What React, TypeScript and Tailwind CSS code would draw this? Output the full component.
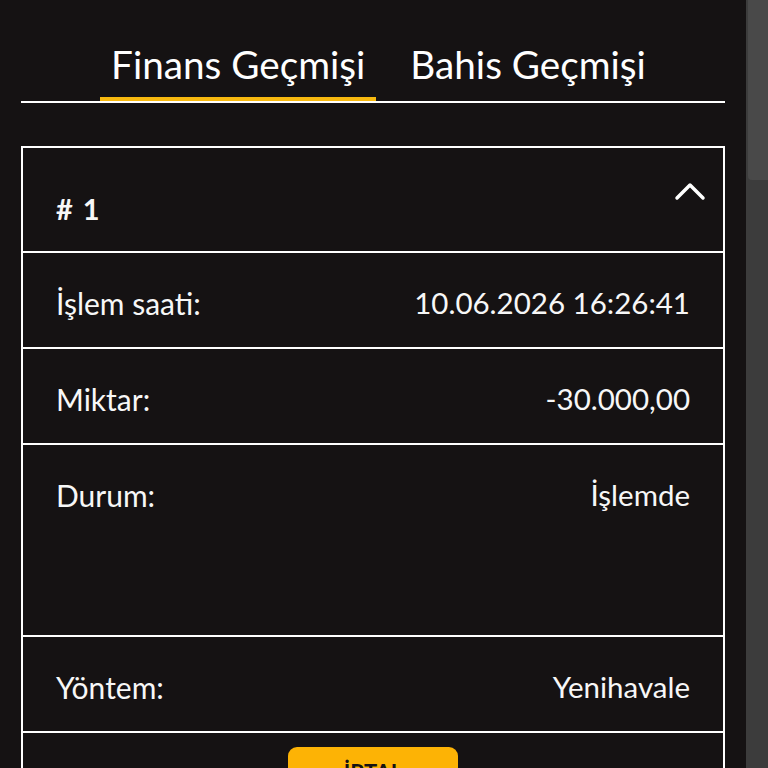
import React from 'react';

const rows = [
  { label: 'İşlem saati:', value: '10.06.2026 16:26:41', tall: false },
  { label: 'Miktar:', value: '-30.000,00', tall: false },
  { label: 'Durum:', value: 'İşlemde', tall: true },
  { label: 'Yöntem:', value: 'Yenihavale', tall: false },
];

const App: React.FC = () => {
  return (
    <div className="flex h-[768px] w-[768px] overflow-hidden bg-[#151213] font-['Lato',sans-serif] text-[#f7f7f7]">
      <div className="flex w-[746px] flex-col px-[21px] pt-[40px]">
        {/* Tabs */}
        <div className="flex justify-center gap-[23px] border-b-2 border-white pl-[11px]">
          <button className="border-b-4 border-[#f7b90f] px-[11px] pb-[9px] text-[38.7px] leading-[48px] text-white">
            Finans Geçmişi
          </button>
          <button className="border-b-4 border-transparent px-[11px] pb-[9px] text-[38.7px] leading-[48px] text-white">
            Bahis Geçmişi
          </button>
        </div>

        {/* Transaction card */}
        <div className="mt-[43px] border-2 border-white">
          <div className="flex h-[105px] items-start justify-between border-b-2 border-white pl-[33px] pr-[16px]">
            <span className="mt-[46px] text-[29px] font-bold leading-[30px] [word-spacing:3px]"># 1</span>
            <svg className="mt-[31px]" width="34" height="24" viewBox="0 0 34 24" fill="none">
              <path d="M4 19 L17 6 L30 19" stroke="white" strokeWidth="3.5" strokeLinecap="round" strokeLinejoin="round" />
            </svg>
          </div>
          {rows.map(row => (
            <div
              key={row.label}
              className={`flex items-start justify-between border-b-2 border-white px-[33px] pt-[32px] ${row.tall ? 'h-[192px]' : 'h-[96px]'}`}
            >
              <span className="text-[30px] leading-[36px]">{row.label}</span>
              <span className="text-[29.5px] leading-[36px]">{row.value}</span>
            </div>
          ))}
          <div className="flex justify-center pt-[14px] pb-[20px]">
            <button className="h-[50px] w-[170px] rounded-[9px] bg-[#fdb305] text-[22px] font-bold text-[#151213]">
              İPTAL
            </button>
          </div>
        </div>
      </div>

      {/* Scrollbar */}
      <div className="flex w-[22px] bg-[#3c3c3c] pl-[2px]">
        <div className="h-[180px] w-full rounded-bl-[4px] bg-[#494949]" />
      </div>
    </div>
  );
};

export default App;
